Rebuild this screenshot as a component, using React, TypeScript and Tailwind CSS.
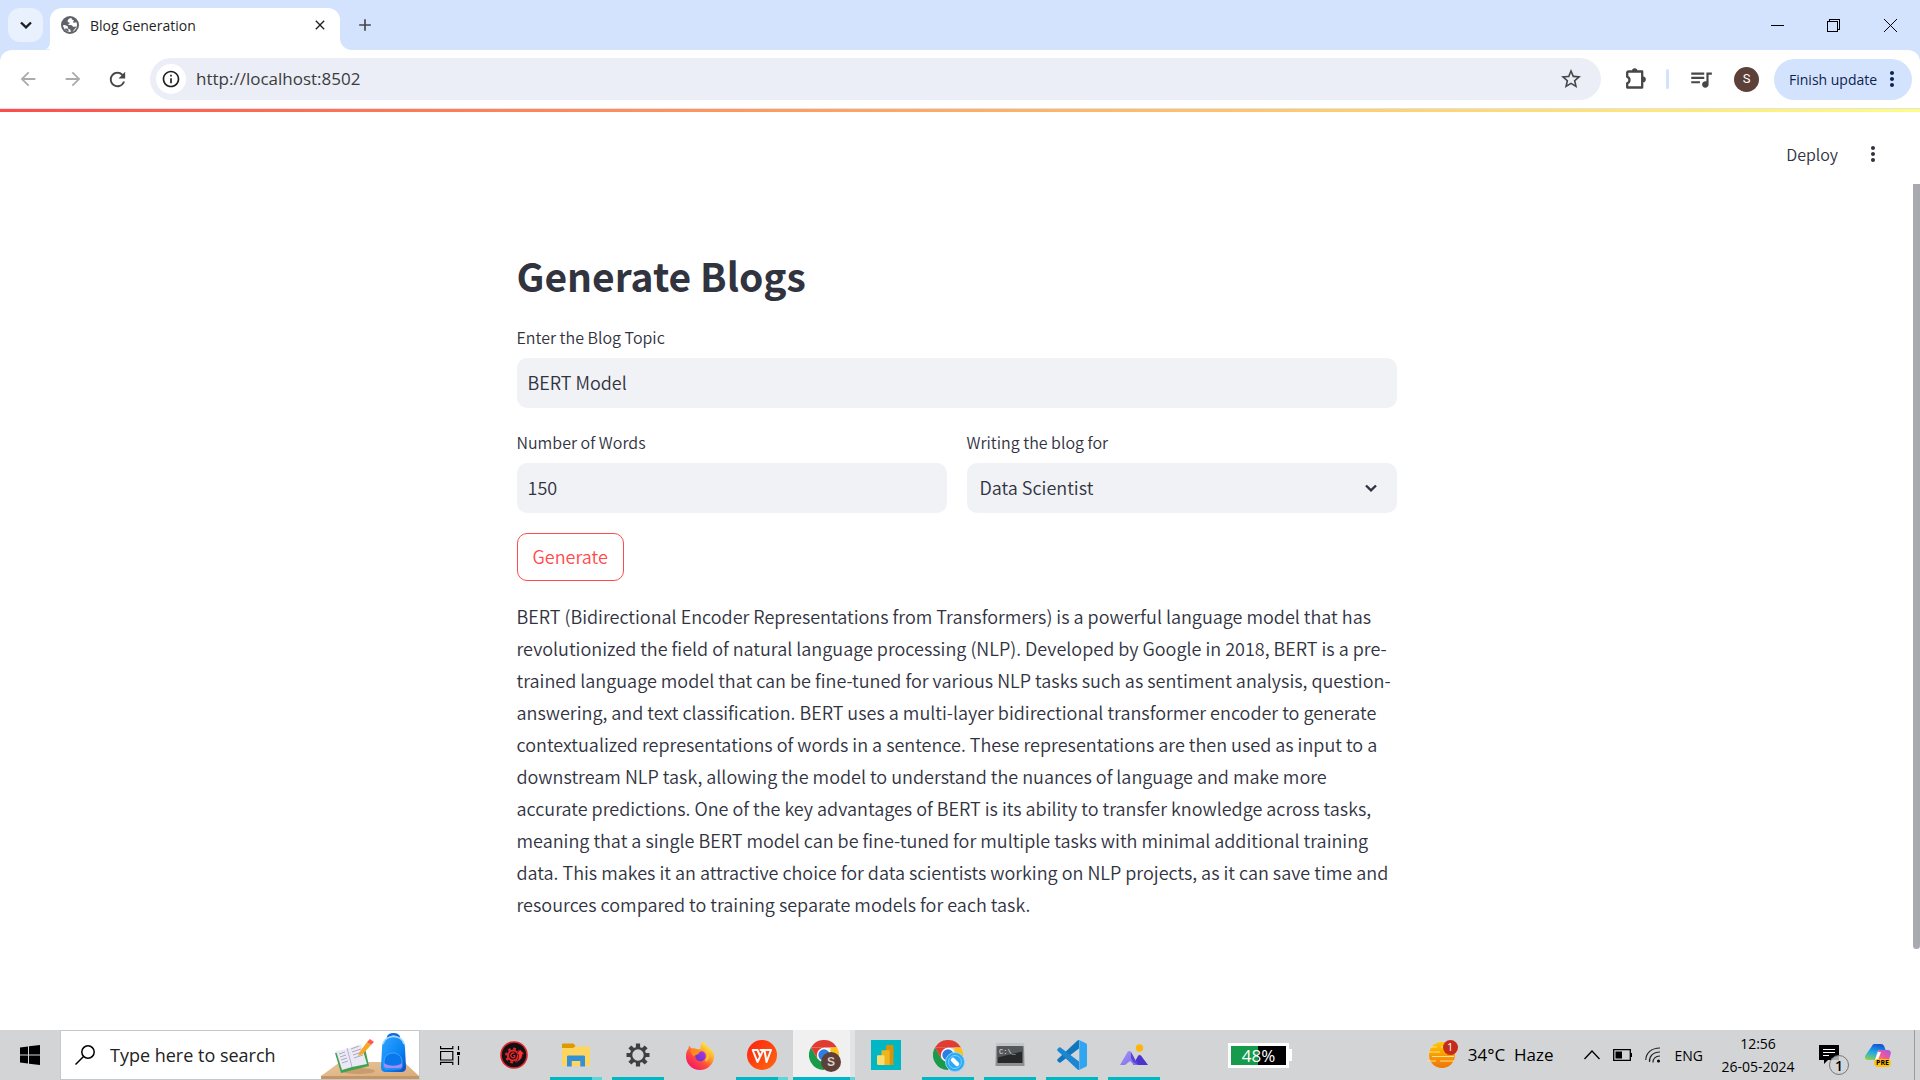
import type { ReactNode } from "react";
import {
  MdArrowBack,
  MdArrowForward,
  MdClose,
  MdInfoOutline,
  MdMoreVert,
  MdQueueMusic,
  MdRefresh,
  MdStarBorder,
  MdAdd,
} from "react-icons/md";

const BLOG = `BERT (Bidirectional Encoder Representations from Transformers) is a powerful language model that has revolutionized the field of natural language processing (NLP). Developed by Google in 2018, BERT is a pre-trained language model that can be fine-tuned for various NLP tasks such as sentiment analysis, question-answering, and text classification. BERT uses a multi-layer bidirectional transformer encoder to generate contextualized representations of words in a sentence. These representations are then used as input to a downstream NLP task, allowing the model to understand the nuances of language and make more accurate predictions. One of the key advantages of BERT is its ability to transfer knowledge across tasks, meaning that a single BERT model can be fine-tuned for multiple tasks with minimal additional training data. This makes it an attractive choice for data scientists working on NLP projects, as it can save time and resources compared to training separate models for each task.`;

function Chevron({ className, width = 2 }: { className: string; width?: number }) {
  return (
    <svg viewBox="0 0 12 8" className={className} fill="none" stroke="currentColor" strokeWidth={width}>
      <path d="M1 1.5 6 6.3 11 1.5" />
    </svg>
  );
}

function Globe() {
  return (
    <svg viewBox="0 0 18 18" className="size-[18px]">
      <circle cx="9" cy="9" r="9" fill="#5f6368" />
      <path d="M10.500 2.100C8.500 2.300 7 3.200 6.600 4.800c-.2 1.500 1 1.700 2.200 1.900-.2 1.200-1.500 1-1.500 2.300 1.500.1 3.400-.2 4.200.9.600 1 1.400 1.200 4.400.3-.5 3-3 5.600-6.200 5.800-.5-.9.200-1.900-.5-2.500-.9-.6-2.200-.3-2.300-1.500 0-.7.100-1.300-.6-1.900C5.300 9.400 3.800 9 2.100 9c.1 3.900 3.200 6.900 6.900 6.900 1 0 1.900-.2 2.700-.5l4.200-5.200.1-1.200c0-.9-.2-1.800-.5-2.600-1.200-.2-1.700.4-2.600.3-1-.2-1-1.300-.3-1.800.5-.4 0-1-.7-1-.8 0-1.300-.5-1.400-1.800z" fill="#fff" />
      <path d="M5.500 12.500c1.500.2 2.200 1 2.200 2.900-1.800-.3-3.300-1.200-4.400-2.700z" fill="#5f6368" />
    </svg>
  );
}

function TabStrip() {
  return (
    <header className="flex h-[50px] items-end bg-[#d3e3fd] pl-2">
      <button aria-label="Search tabs" className="mb-2 flex h-[34px] w-[35px] items-center justify-center rounded-xl bg-[#eaf1fe] text-[#1f1f1f]">
        <Chevron className="h-2 w-3" width={2.4} />
      </button>
      <svg viewBox="0 0 7 12" className="ml-px h-3 w-[6px]" fill="#fff"><path d="M0 12C4 12 7 9 7 3v9z" /></svg>
      <div className="flex h-[42px] w-[290px] items-center rounded-t-xl bg-white pr-3 pb-2 pl-[11px]">
        <Globe />
        <span className="ml-[11px] flex-1 text-[14px] text-[#1f1f1f]">Blog Generation</span>
        <button aria-label="Close tab" className="text-[#1f1f1f]"><MdClose className="size-4" /></button>
      </div>
      <svg viewBox="0 0 14 14" className="size-3" fill="#fff"><path d="M0 0c0 8 6 14 14 14H0z" /></svg>
      <button aria-label="New tab" className="mb-[15px] ml-[3px] text-[#474747]"><MdAdd className="size-5" /></button>
      <div className="flex-1" />
      <div className="flex h-full items-center pr-px text-black">
        <button aria-label="Minimize" className="flex w-14 justify-center">
          <svg viewBox="0 0 13 13" className="size-[13px]" shapeRendering="crispEdges"><path d="M0 6h13v1H0z" /></svg>
        </button>
        <button aria-label="Restore" className="flex w-14 justify-center">
          <svg viewBox="0 0 13 13" className="size-[13px]" fill="none" stroke="currentColor" shapeRendering="crispEdges">
            <path d="M.5 2.500h10v10H.5zM2.500 2.500v-2h10v10h-2" />
          </svg>
        </button>
        <button aria-label="Close window" className="flex w-[58px] justify-center">
          <svg viewBox="0 0 13 13" className="size-[13px]" stroke="currentColor"><path d="M0 0l13 13M13 0 0 13" /></svg>
        </button>
      </div>
    </header>
  );
}

function Toolbar() {
  return (
    <div className="bg-[#d3e3fd]">
      <div className="flex h-[58px] items-center rounded-t-xl bg-white pr-2 pl-[17px] text-[#474747]">
        <button aria-label="Back" className="text-[#ababab]"><MdArrowBack className="size-[22px]" /></button>
        <button aria-label="Forward" className="ml-[23px] text-[#ababab]"><MdArrowForward className="size-[22px]" /></button>
        <button aria-label="Reload" className="ml-[22px]"><MdRefresh className="size-[23px]" /></button>
        <div className="ml-[21px] flex h-[42px] flex-1 items-center rounded-full bg-[#ebeef7] pr-[18px] pl-[6px]">
          <button aria-label="Site information" className="flex size-[30px] items-center justify-center rounded-full bg-white text-[#1f1f1f]">
            <MdInfoOutline className="size-5" />
          </button>
          <input aria-label="Address" defaultValue="http://localhost:8502" className="ml-[10px] min-w-0 flex-1 bg-transparent text-[17px] text-[#3c3c3c] outline-none" />
          <button aria-label="Bookmark this tab"><MdStarBorder className="size-6" /></button>
        </div>
        <button aria-label="Extensions" className="ml-6">
          <svg viewBox="0 0 21 22" className="h-[22px] w-[21px]">
            <path d="M3 3.500h14.200v16H2.200v-4.300c2.800-.6 3.200-5.800 0-6.400V4.300z" fill="none" stroke="currentColor" strokeWidth="2.300" strokeLinejoin="round" />
            <path d="M7 3a2.700 2.700 0 0 1 5.400 0zM18 8.600a2.800 2.800 0 0 1 0 5.600z" fill="currentColor" />
          </svg>
        </button>
        <div className="ml-5 h-5 w-[3px] rounded-full bg-[#d3e3fd]" />
        <button aria-label="Media controls" className="ml-[19px]"><MdQueueMusic className="size-[26px]" /></button>
        <button className="ml-5 flex size-[25px] items-center justify-center rounded-full bg-[#5d4037] font-[Roboto] text-[13px] text-white">S</button>
        <button className="ml-[15px] flex h-[41px] w-[138px] items-center justify-between rounded-full bg-[#d3e3fd] pr-2 pl-[15px] text-[14px] whitespace-nowrap text-[#0b2350]">
          Finish update
          <MdMoreVert className="size-6" />
        </button>
      </div>
    </div>
  );
}

function Field({ id, label, children }: { id: string; label: string; children: ReactNode }) {
  return (
    <div className="flex flex-col gap-2">
      <label htmlFor={id} className="text-[16px] leading-[26px]">{label}</label>
      {children}
    </div>
  );
}

function BlogPage() {
  return (
    <main className="flex flex-1 flex-col bg-white font-['Noto_Sans_CJK_SC',sans-serif] font-[350] text-[#31333f]">
      <div className="h-px bg-[#dde3ea]" />
      <div className="h-[3px] bg-linear-to-r from-[#ff4b4b] to-[#fffd80]" />
      <div className="flex h-[72px] items-center justify-end pt-3 pr-[35px]">
        <button className="pb-px text-[16px]">Deploy</button>
        <button aria-label="Main menu" className="ml-[23px]"><MdMoreVert className="size-6" /></button>
      </div>
      <div className="flex flex-1">
        <div className="flex flex-1 justify-center px-4">
          <form className="w-full max-w-[880px] pt-[61px]" onSubmit={(e) => e.preventDefault()}>
            <h1 className="text-[39px] leading-[60px] font-bold">Generate Blogs</h1>
            <div className="mt-[19px]">
              <Field id="topic" label="Enter the Blog Topic">
                <input id="topic" defaultValue="BERT Model" className="h-[50px] rounded-[10px] bg-[#f0f2f6] px-[11px] pb-[2px] text-[18px] outline-none" />
              </Field>
            </div>
            <div className="mt-[21px] grid grid-cols-2 gap-5">
              <Field id="words" label="Number of Words">
                <input id="words" defaultValue="150" className="h-[50px] rounded-[10px] bg-[#f0f2f6] px-[11px] pb-[2px] text-[18px] outline-none" />
              </Field>
              <Field id="audience" label="Writing the blog for">
                <div className="relative">
                  <select id="audience" className="h-[50px] w-full appearance-none rounded-[10px] bg-[#f0f2f6] px-[13px] pb-[2px] text-[18px] outline-none">
                    <option>Data Scientist</option>
                  </select>
                  <Chevron className="pointer-events-none absolute top-[21px] right-5 h-2 w-3" width={2.4} />
                </div>
              </Field>
            </div>
            <button className="mt-5 h-12 rounded-[10px] border border-[#ff4b4b] px-[15px] pb-[2px] text-[18px] text-[#ff4b4b]">Generate</button>
            <p className="mt-[19px] text-[18px] leading-8">{BLOG}</p>
          </form>
        </div>
        <div className="flex w-[7px] pb-[81px]">
          <div className="flex-1 rounded-b-sm bg-[#a9aab0]" />
        </div>
      </div>
    </main>
  );
}

function DeskArt() {
  return (
    <svg viewBox="0 0 98 48" className="h-12 w-[98px]">
      <defs>
        <linearGradient id="bag" x1="0" y1="0" x2="1" y2="1"><stop offset="0" stopColor="#33a6ff" /><stop offset=".6" stopColor="#0a84f5" /><stop offset="1" stopColor="#0a4cc0" /></linearGradient>
        <linearGradient id="desk" x1="0" y1="0" x2="1" y2="1"><stop offset="0" stopColor="#e8c49a" /><stop offset="1" stopColor="#d9ad7c" /></linearGradient>
      </defs>
      <path d="M19 31h64l15 14H0z" fill="url(#desk)" />
      <path d="M0 45h98v3H0z" fill="#c69566" />
      <ellipse cx="37" cy="40" rx="17" ry="3" fill="#b98b5c" opacity=".6" />
      <path d="m14 22 6 20 28-7-4-18z" fill="#3fa34d" />
      <path d="m15 20 6 19 10-3 15-3-6-20-14 5z" fill="#ece9f6" />
      <path d="m26 17 5 19" stroke="#b5afd0" strokeWidth="1" />
      <path d="m18 23 6-2m-5 5 6-2m-5 5 6-2m-5 5 6-2m3-12 8-3m-7 6 9-3m-8 6 9-3m-8 6 9-3" stroke="#a5a1bb" strokeWidth=".9" />
      <path d="m38 22 8-11 4 3-8 9-5 2z" fill="#f9a825" />
      <path d="m46 11 3-3 4 3-3 3z" fill="#ff5a4a" />
      <path d="M67 7c0-5 11-5 11 0" fill="none" stroke="#0a6be0" strokeWidth="2.500" />
      <path d="M61 17c0-16 23-16 23 0l1 19c0 4-2 5-5 5H65c-3 0-5-1-5-5z" fill="url(#bag)" />
      <path d="M62 13c2-10 19-10 21 0" fill="none" stroke="#a5d6ff" strokeWidth="1.500" />
      <path d="M63 31c0-12 18-12 18 0v4c0 2-1 3-3 3H66c-2 0-3-1-3-3z" fill="#0a78ec" stroke="#58b6ff" strokeWidth=".7" />
      <path d="M63 32c3 3 14 4 18 0v3c0 1-1 2-3 2H66c-2 0-3-1-3-2z" fill="#a58bf5" />
    </svg>
  );
}

function GearBadge() {
  return (
    <svg viewBox="0 0 28 28" className="size-7">
      <circle cx="14" cy="14" r="13" fill="#111" stroke="#e3262e" strokeWidth="1.600" />
      <circle cx="13" cy="14.500" r="5" fill="none" stroke="#e3262e" strokeWidth="2.200" />
      <circle cx="13" cy="14.500" r="6.800" fill="none" stroke="#e3262e" strokeWidth="2.200" strokeDasharray="2.700 2.640" />
      <path d="M14.500 12.500a2.300 2.300 0 1 0 .3 3.500v-1.300h-1.500" fill="none" stroke="#e3262e" strokeWidth="1.300" />
      <path d="M20 8.500l4.500 4.500-2 .2c0 4-2.500 6.800-6.500 8 2.500-2.500 2.800-4.500 2.500-7.700l-2.200-.3z" fill="#ff3038" stroke="#111" strokeWidth=".6" />
    </svg>
  );
}

function FolderIcon() {
  return (
    <svg viewBox="0 0 28 24" className="h-6 w-7">
      <path d="M0 1.500C0 .8.500.5 1 .5h10.500l2 2.500v4H0z" fill="#dc9a00" />
      <path d="M0 5h11l2-1.500h14c.6 0 1 .4 1 1V23H0z" fill="#ffd562" />
      <path d="M5 23.500V14c0-1 .5-1.500 1.500-1.500h15c1 0 1.500.5 1.500 1.500v9.500h-4.700V18H9.700v5.500z" fill="#338fd6" />
    </svg>
  );
}

function SettingsIcon() {
  return (
    <svg viewBox="-12 -12 24 24" className="size-6" fill="none" stroke="#404040">
      <circle r="6.900" strokeWidth="2.400" />
      <g strokeWidth="4.200">
        <path d="M0-11.500V-7M0 11.500V7M-11.500 0H-7M11.500 0H7" />
        <path d="M0-11.500V-7M0 11.500V7M-11.500 0H-7M11.500 0H7" transform="rotate(45)" />
      </g>
    </svg>
  );
}

function FirefoxIcon() {
  return (
    <svg viewBox="0 0 28 29" className="h-[29px] w-7">
      <defs>
        <linearGradient id="ff" x1=".85" y1=".1" x2=".2" y2=".95"><stop offset="0" stopColor="#fff44f" /><stop offset=".35" stopColor="#ffa32c" /><stop offset=".65" stopColor="#ff4a3c" /><stop offset="1" stopColor="#f5156c" /></linearGradient>
        <linearGradient id="ffIn" x1="0" y1="1" x2="1" y2="0"><stop offset="0" stopColor="#5b35d5" /><stop offset="1" stopColor="#b833e1" /></linearGradient>
      </defs>
      <path d="M18 0c.5 2.500 2 4 4 5.700 1.400 1 2 2 2.300 3.300.5-.5.600-1.200.600-1.800C27 10 28 12.500 28 15.500 28 23 22 29 14 29S0 23 0 15.500c0-4 1-6 2.500-8L3 4.500l2.500 3c2-.7 4-.3 5.500.5 1.500-.2 2.500 0 3.500.3C14 5 15 2 18 0z" fill="url(#ff)" />
      <circle cx="14.500" cy="15" r="5.300" fill="url(#ffIn)" />
      <path d="M4.500 9c3-2 6-1 7.500.5 1.500-.5 3 0 4 1-2 0-3 1-3.500 2.300-1.500 1.200-3.500 1-4.500 2.700C6 14 5 12 4.500 9z" fill="#ff8a1e" />
      <path d="M20 8c3 4 3 9-.5 12" stroke="#ffc936" strokeWidth="2.200" fill="none" opacity=".8" />
    </svg>
  );
}

function WpsIcon() {
  return (
    <svg viewBox="0 0 30 30" className="size-[30px]">
      <defs><linearGradient id="wps" x1="0" y1="0" x2="1" y2="1"><stop offset="0" stopColor="#ff1f0f" /><stop offset="1" stopColor="#ff6a10" /></linearGradient></defs>
      <circle cx="15" cy="15" r="15" fill="url(#wps)" />
      <path d="M10.500 10H5.700l4.800 12 5.800-12h1.200l2 12L24 10H13.500M10.500 10l2.700 6.500" fill="none" stroke="#fff" strokeWidth="2" strokeLinejoin="round" strokeLinecap="round" />
    </svg>
  );
}

function ChromeIcon({ children }: { children: ReactNode }) {
  return (
    <span className="relative">
      <svg viewBox="-15 -15 30 30" className="size-[30px]">
        <path d="M-13-7.500A15 15 0 0 1 13-7.500H0z" fill="#e03c31" />
        <path d="M-13-7.500A15 15 0 0 0 0 15L6.500 3.750-6.500 3.750z" fill="#199b4b" />
        <path d="M13-7.500A15 15 0 0 1 0 15L6.500 3.750 6.500-7.500z" fill="#fcc21b" />
        <path d="M-13-7.500-6.500 3.750 0-7.500z" fill="#e03c31" />
        <circle r="7.200" fill="#fff" />
        <circle r="5.700" fill="#2f7de1" />
      </svg>
      {children}
    </span>
  );
}

function PowerBiIcon() {
  return (
    <svg viewBox="0 0 30 30" className="size-[30px]">
      <path d="M0 0h30v30H0z" fill="#00b7c3" />
      <path d="M15 6.500c0-.8.500-1.500 1.300-1.500h5c.7 0 1.200.600 1.200 1.300V25H15z" fill="#d99308" />
      <path d="M10.500 11.500c0-.7.500-1.200 1.200-1.200h5.800c.7 0 1.200.5 1.200 1.200V25h-8.200z" fill="#f0b51c" />
      <path d="M6 16.500c0-.7.500-1.200 1.200-1.200h5c.7 0 1.300.5 1.300 1.200V25H7.200C6.500 25 6 24.500 6 23.800z" fill="#fbdc6c" />
    </svg>
  );
}

function TerminalIcon() {
  return (
    <svg viewBox="0 0 30 24" className="h-6 w-[30px]">
      <path d="M1 1h28l.5 22H.5z" fill="#8d9093" />
      <path d="M1 0h28v3H1z" fill="#c2c5c8" />
      <path d="M2.500 3.500h25v16.500h-25z" fill="#26282a" />
      <path d="M2.500 3.500h25v5l-25 6z" fill="#55585b" />
      <text x="4" y="11" fontSize="7" fill="#e2e2e2" fontFamily="Liberation Mono, monospace">C:\_</text>
    </svg>
  );
}

function CodeIcon() {
  return (
    <svg viewBox="0 0 30 30" className="size-[30px]">
      <path d="M22 0v8.500L3.500 22.500c-.5.400-1 .4-1.400 0L.5 21c-.5-.5-.5-1.200 0-1.700L20 1c.6-.6 1.200-.9 2-1z" fill="#1176bd" />
      <path d="M22 30v-8.500L3.500 7.500c-.5-.4-1-.4-1.400 0L.5 9c-.5.500-.5 1.200 0 1.700L20 29c.6.6 1.200.9 2 1z" fill="#1b87d2" />
      <path d="M22 0l7 3.300c.6.300 1 .9 1 1.500v20.400c0 .6-.4 1.200-1 1.500L22 30c-.6 0-1.200-.3-1.600-.8.900.7 1.900.1 1.900-.9V1.700c0-1-1-1.600-1.900-.9.400-.5 1-.8 1.600-.8z" fill="#32a5f1" />
    </svg>
  );
}

function PeaksIcon() {
  return (
    <svg viewBox="0 0 28 22" className="h-[22px] w-7">
      <defs><linearGradient id="peak" x1="0" y1="0" x2="1" y2="1"><stop offset="0" stopColor="#a695f7" /><stop offset="1" stopColor="#7a6be8" /></linearGradient></defs>
      <path d="M13 21l5-9c.8-1.500 2.500-1.500 3.300 0L28 21z" fill="#4c33cf" />
      <path d="M0 21 7.500 8C8.500 6.500 10 6.500 11 8l7 13h-4l-4-4-5 4z" fill="url(#peak)" />
      <path d="m11 8 7 13-5-3-2-4z" fill="#5b43d6" />
      <circle cx="19.500" cy="4" r="3.700" fill="#ffb50d" />
    </svg>
  );
}

const Apps: { name: string; icon: ReactNode; open?: boolean; many?: boolean; active?: boolean }[] = [
  { name: "Control center", icon: <GearBadge /> },
  { name: "File Explorer", icon: <FolderIcon />, open: true, many: true },
  { name: "Settings", icon: <SettingsIcon />, open: true },
  { name: "Firefox", icon: <FirefoxIcon /> },
  { name: "Office", icon: <WpsIcon />, open: true, many: true },
  {
    name: "Chrome",
    icon: (
      <ChromeIcon>
        <span className="absolute top-3 left-3 flex size-5 items-center justify-center rounded-full bg-[#5d4037] font-['Liberation_Sans',sans-serif] text-[12px] font-bold text-[#d6ccc8]">S</span>
      </ChromeIcon>
    ),
    open: true,
    many: true,
    active: true,
  },
  { name: "Power BI", icon: <PowerBiIcon /> },
  {
    name: "Chrome profile",
    icon: (
      <ChromeIcon>
        <svg viewBox="0 0 20 20" className="absolute top-3 left-3 size-5">
          <circle cx="10" cy="10" r="9.500" fill="#29a9f5" stroke="#8fd3fb" />
          <circle cx="10" cy="10" r="6.500" fill="none" stroke="#7fd0fb" strokeWidth="1" />
          <path d="m8 8 4 4" stroke="#fff" strokeWidth="4.500" strokeLinecap="round" />
        </svg>
      </ChromeIcon>
    ),
    open: true,
  },
  { name: "Command Prompt", icon: <TerminalIcon />, open: true },
  { name: "Code", icon: <CodeIcon />, open: true },
  { name: "Gallery", icon: <PeaksIcon />, open: true },
];

function TaskButton({ name, icon, open, many, active }: (typeof Apps)[number]) {
  return (
    <button
      aria-label={name}
      className={`relative flex w-[62px] items-center justify-center ${active ? "border-r-[5px] border-[#e2e3e4] bg-[#f0f0f0] pl-[5px]" : ""}`}
    >
      {icon}
      {open && (
        <span className={`absolute bottom-0 flex h-[3px] bg-[#00b7c3] ${active ? "left-0 -right-[5px]" : "inset-x-[5px]"}`}>
          {many && <span className={`ml-auto bg-[#5fd4da] ${active ? "w-[5px]" : "w-[10px]"}`} />}
        </span>
      )}
    </button>
  );
}

function WeatherIcon() {
  return (
    <svg viewBox="0 0 30 28" className="h-7 w-[30px]">
      <defs><linearGradient id="sun" x1="0" y1="0" x2="0" y2="1"><stop offset="0" stopColor="#ffc800" /><stop offset="1" stopColor="#f0720a" /></linearGradient></defs>
      <circle cx="15" cy="14" r="13" fill="url(#sun)" />
      <path d="M4 6h6M14 6h3M1 11h12M5 15.500h22M0 20h9M13 20h14" stroke="#ffe08a" strokeWidth="1.200" />
    </svg>
  );
}

function Tray() {
  return (
    <div className="flex items-center text-black">
      <button className="flex items-center text-[17px]">
        <span className="relative mr-[11px]">
          <WeatherIcon />
          <span className="absolute -top-px -right-px flex size-[15px] items-center justify-center rounded-full bg-[#c42b1c] text-[11px] text-white">1</span>
        </span>
        34°C&nbsp;&nbsp;Haze
      </button>
      <button aria-label="Show hidden icons" className="ml-[30px]">
        <svg viewBox="0 0 16 10" className="h-[10px] w-4" fill="none" stroke="currentColor" strokeWidth="1.300"><path d="M.5 9 8 1l7.500 8" /></svg>
      </button>
      <svg viewBox="0 0 19 12" className="ml-[13px] h-3 w-[19px]">
        <path d="M.7.700h16.600v10.600H.7z" fill="none" stroke="#000" strokeWidth="1.300" />
        <path d="M2.500 2.500H9v7H2.500zM17.500 4H19v4h-1.500z" />
      </svg>
      <svg viewBox="0 0 16 16" className="ml-[13px] size-4" fill="none" stroke="#222" strokeWidth="1.200">
        <path d="M.8 13C.8 6 6.500 1 15 1M4.500 15C4 9.500 8 5 15 5M8 15.500C7.700 12 10.500 9 15 9" />
        <circle cx="13.500" cy="14" r="1.500" fill="#000" stroke="none" />
      </svg>
      <span className="ml-[14px] text-[14px]">ENG</span>
      <button className="ml-4 w-[78px] text-center text-[14px] leading-[23px] whitespace-nowrap">
        12:56
        <br />
        26-05-2024
      </button>
      <button aria-label="Notifications" className="relative mt-[10px] ml-[22px] flex size-[30px] items-start">
        <svg viewBox="0 0 20 19" className="h-[19px] w-5">
          <path d="M0 0h20v15H9l-4 4v-4H0z" />
          <path d="M4 4.500h12M4 7.500h12M4 10.500h6" stroke="#fff" strokeWidth="1.200" />
        </svg>
        <span className="absolute right-0 bottom-0 flex size-5 items-center justify-center rounded-full border border-[#777] bg-[#d2d3d5]/80 text-[14px] font-semibold">1</span>
      </button>
      <button aria-label="Copilot preview" className="relative ml-4">
        <svg viewBox="0 0 26 22" className="h-6 w-[26px]">
          <defs>
            <linearGradient id="copA" x1=".5" y1="0" x2=".2" y2="1"><stop offset="0" stopColor="#1557d6" /><stop offset=".5" stopColor="#1fa8e8" /><stop offset="1" stopColor="#8fd14b" /></linearGradient>
            <linearGradient id="copB" x1="1" y1="0" x2="0" y2="1"><stop offset="0" stopColor="#9b5cf0" /><stop offset=".5" stopColor="#f0559b" /><stop offset="1" stopColor="#ff9b50" /></linearGradient>
          </defs>
          <path d="M7 2c.6-1.400 1.500-2 3-2h6c2 0 3 1.500 3.500 3l1 3h-5c-2 0-3 1-3.500 3l-2 7H3c-2.300 0-3.500-1.500-3-4z" fill="url(#copA)" />
          <path d="M16 6h7c2 0 3.300 1.500 2.700 4l-2 7H10l3-9c.5-1.500 1.500-2 3-2z" fill="url(#copB)" />
          <path d="M13 8h3l-3 8h-3z" fill="#fff" />
        </svg>
        <span className="absolute right-0 bottom-0 rounded-sm bg-[#ffc20e] px-[2px] text-[7px] leading-[8px] font-bold">PRE</span>
      </button>
      <div className="ml-[23px] h-[50px] w-[6px] border-l border-[#9a9b9d]" />
    </div>
  );
}

function Taskbar() {
  return (
    <footer className="flex h-[50px] bg-[#d3d4d6]">
      <button aria-label="Start" className="flex w-[60px] items-center justify-center">
        <svg viewBox="0 0 20 20" className="size-5"><path d="M0 2.600 8 1.500v8H0zM9 1.300 20 0v9.500H9zM0 10.500h8v8l-8-1zM9 10.500h11V20L9 18.700z" /></svg>
      </button>
      <label className="flex w-[360px] items-center border border-[#c6c7c9] bg-white pl-[14px]">
        <svg viewBox="0 0 20 20" className="size-5" fill="none" stroke="#000" strokeWidth="1.500"><circle cx="13" cy="7" r="6.200" /><path d="M8.500 11.500.5 19.500" /></svg>
        <input aria-label="Search" placeholder="Type here to search" className="ml-[15px] min-w-0 flex-1 bg-transparent text-[18px] outline-none placeholder:text-[#222]" />
        <DeskArt />
      </label>
      <button aria-label="Task view" className="flex w-[63px] items-center justify-center pr-[3px]">
        <svg viewBox="0 0 20 19" className="h-[19px] w-5" fill="none" stroke="#000" strokeWidth="1.200">
          <path d="M.6 5.500h12.200v8.500H.6zM.6 0v2.600h12.200V0M.6 19v-2.600h12.200V19M18.500 0v4M18.500 10v9" />
          <path d="M17 6h3v3h-3z" fill="#000" stroke="none" />
        </svg>
      </button>
      {Apps.map((app) => (
        <TaskButton key={app.name} {...app} />
      ))}
      <div className="ml-[63px] flex items-center">
        <div className="flex h-[25px] w-[61px] border-[3px] border-white bg-linear-to-r from-[#169a4b] from-50% to-black to-50% text-[17px] leading-[19px] text-white">
          <span className="flex-1 text-center">48%</span>
        </div>
        <div className="h-3 w-[3px] bg-white" />
      </div>
      <div className="flex-1" />
      <Tray />
    </footer>
  );
}

export default function App() {
  return (
    <div className="flex min-h-screen flex-col bg-white font-['Open_Sans',sans-serif]">
      <TabStrip />
      <Toolbar />
      <BlogPage />
      <Taskbar />
    </div>
  );
}
